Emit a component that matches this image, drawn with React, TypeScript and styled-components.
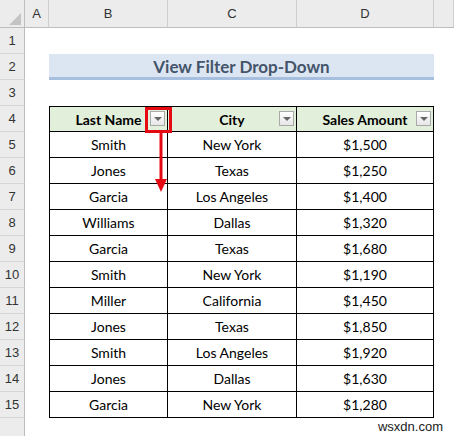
import React from "react";
import styled, { createGlobalStyle } from "styled-components";

const GlobalStyle = createGlobalStyle`
  html, body {
    margin: 0;
    padding: 0;
    background: #ffffff;
    overflow: hidden;
  }
  * {
    box-sizing: border-box;
  }
`;

const COLS = "25px 24px 119px 129px 137px 1fr";

const Sheet = styled.div`
  position: relative;
  width: 454px;
  height: 436px;
  background: #ffffff;
  font-family: Lato, "Liberation Sans", sans-serif;
  overflow: hidden;
`;

const HeaderRow = styled.div`
  display: grid;
  grid-template-columns: ${COLS};
  height: 28px;
  background: #ececec;
  border-bottom: 1px solid #bdbdbd;
`;

const Corner = styled.div`
  position: relative;
  border-right: 1px solid #bdbdbd;
  display: flex;
  align-items: flex-end;
  justify-content: flex-end;
  padding: 0 3px 2px 0;
`;

const CornerTriangle = styled.div`
  width: 0;
  height: 0;
  border-left: 12px solid transparent;
  border-bottom: 12px solid #c4c4c4;
`;

const ColLetter = styled.div`
  display: flex;
  align-items: center;
  justify-content: center;
  font-family: "Liberation Sans", Arial, sans-serif;
  font-size: 13px;
  color: #333;
  border-right: 1px solid #cfcfcf;
`;

const Row = styled.div<{ $h?: number }>`
  display: grid;
  grid-template-columns: ${COLS};
  height: ${(p) => p.$h ?? 26}px;
`;

const RowNum = styled.div`
  display: flex;
  align-items: center;
  justify-content: center;
  background: #ececec;
  border-right: 1px solid #bdbdbd;
  border-bottom: 1px solid #d6d6d6;
  font-family: "Liberation Sans", Arial, sans-serif;
  font-size: 13px;
  color: #333;
`;

const Blank = styled.div``;

const TitleBand = styled.div`
  grid-column: 3 / 6;
  display: flex;
  align-items: center;
  justify-content: center;
  background: #dce6f2;
  border-bottom: 3px solid #a7bfde;
  color: #44546a;
  font-weight: 700;
  font-size: 17px;
  padding-top: 2px;
`;

const Cell = styled.div<{ $head?: boolean; $first?: boolean; $top?: boolean }>`
  position: relative;
  display: flex;
  align-items: center;
  justify-content: center;
  border-right: 1px solid #000;
  border-bottom: 1px solid #000;
  border-left: ${(p) => (p.$first ? "1px solid #000" : "none")};
  border-top: ${(p) => (p.$top ? "1px solid #000" : "none")};
  background: ${(p) => (p.$head ? "#e2efda" : "#ffffff")};
  font-weight: ${(p) => (p.$head ? 700 : 400)};
  font-size: 14px;
  color: #000;
`;

const FilterButton = styled.div`
  position: absolute;
  right: 2px;
  bottom: 5px;
  width: 15px;
  height: 15px;
  border: 1px solid #a9a9a9;
  background: linear-gradient(#ffffff, #e6e6e6);
  display: flex;
  align-items: center;
  justify-content: center;

  &::after {
    content: "";
    width: 0;
    height: 0;
    border-left: 4px solid transparent;
    border-right: 4px solid transparent;
    border-top: 4px solid #666;
    margin-top: 1px;
  }
`;

const Highlight = styled.div`
  position: absolute;
  left: 145px;
  top: 107px;
  width: 27px;
  height: 26px;
  border: 3px solid #e50914;
`;

const Arrow = styled.svg`
  position: absolute;
  left: 154px;
  top: 133px;
`;

const Watermark = styled.div`
  position: absolute;
  right: 11px;
  bottom: 2px;
  font-family: "Liberation Sans", Arial, sans-serif;
  font-size: 13px;
  color: #222;
`;

const rows = [
  ["Smith", "New York", "$1,500"],
  ["Jones", "Texas", "$1,250"],
  ["Garcia", "Los Angeles", "$1,400"],
  ["Williams", "Dallas", "$1,320"],
  ["Garcia", "Texas", "$1,680"],
  ["Smith", "New York", "$1,190"],
  ["Miller", "California", "$1,450"],
  ["Jones", "Texas", "$1,850"],
  ["Smith", "Los Angeles", "$1,920"],
  ["Jones", "Dallas", "$1,630"],
  ["Garcia", "New York", "$1,280"],
];

const headers = ["Last Name", "City", "Sales Amount"];

export default function App() {
  return (
    <Sheet>
      <GlobalStyle />
      <HeaderRow>
        <Corner>
          <CornerTriangle />
        </Corner>
        {["A", "B", "C", "D", ""].map((l, i) => (
          <ColLetter key={i}>{l}</ColLetter>
        ))}
      </HeaderRow>

      <Row>
        <RowNum>1</RowNum>
      </Row>
      <Row>
        <RowNum>2</RowNum>
        <Blank />
        <TitleBand>View Filter Drop-Down</TitleBand>
      </Row>
      <Row>
        <RowNum>3</RowNum>
      </Row>
      <Row>
        <RowNum>4</RowNum>
        <Blank />
        {headers.map((h, i) => (
          <Cell key={h} $head $top $first={i === 0}>
            {h}
            <FilterButton />
          </Cell>
        ))}
      </Row>
      {rows.map((r, i) => (
        <Row key={i}>
          <RowNum>{i + 5}</RowNum>
          <Blank />
          {r.map((v, j) => (
            <Cell key={j} $first={j === 0}>
              {v}
            </Cell>
          ))}
        </Row>
      ))}
      <Row $h={30}>
        <RowNum />
      </Row>

      <Highlight />
      <Arrow width="14" height="60" viewBox="0 0 14 60">
        <line x1="7" y1="0" x2="7" y2="48" stroke="#e50914" strokeWidth="3" />
        <polygon points="1,46 13,46 7,59" fill="#e50914" />
      </Arrow>
      <Watermark>wsxdn.com</Watermark>
    </Sheet>
  );
}
